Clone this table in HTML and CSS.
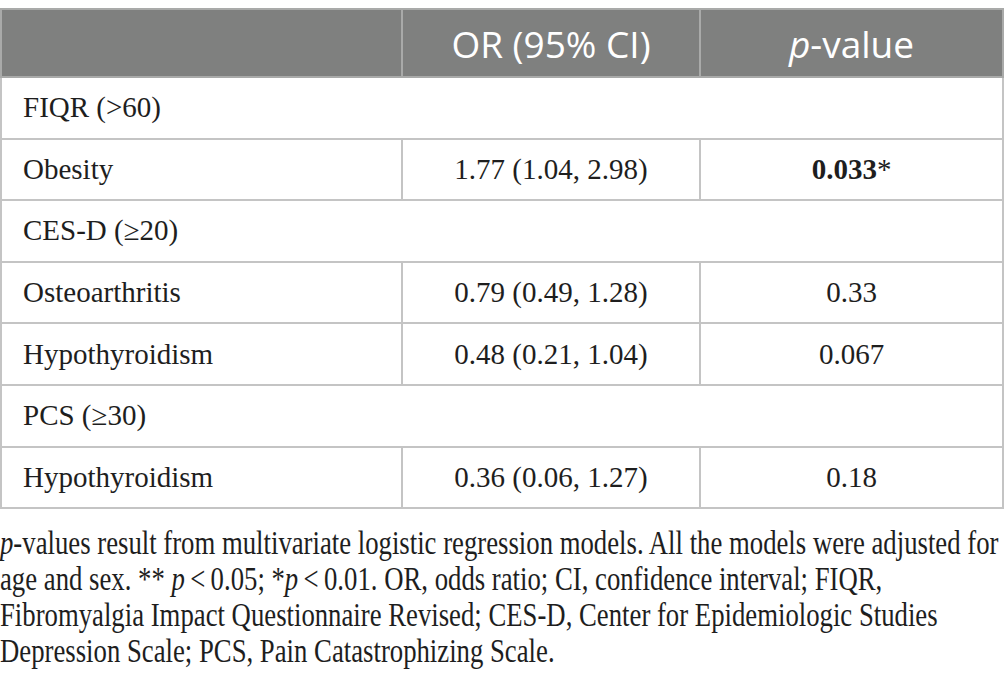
FILE: index.html
```html
<!DOCTYPE html>
<html lang="en">
<head>
    <meta charset="UTF-8">
    <title>Logistic regression results</title>
    <link rel="stylesheet" href="styles.css">
</head>
<body>
    <table class="results">
        <thead>
            <tr>
                <th class="col-label"></th>
                <th class="col-or">OR (95% CI)</th>
                <th class="col-p"><i>p</i>-value</th>
            </tr>
        </thead>
        <tbody>
            <tr class="group">
                <td colspan="3">FIQR (&gt;60)</td>
            </tr>
            <tr>
                <td>Obesity</td>
                <td class="num">1.77 (1.04, 2.98)</td>
                <td class="num"><b>0.033</b>*</td>
            </tr>
            <tr class="group">
                <td colspan="3">CES-D (≥20)</td>
            </tr>
            <tr>
                <td>Osteoarthritis</td>
                <td class="num">0.79 (0.49, 1.28)</td>
                <td class="num">0.33</td>
            </tr>
            <tr>
                <td>Hypothyroidism</td>
                <td class="num">0.48 (0.21, 1.04)</td>
                <td class="num">0.067</td>
            </tr>
            <tr class="group">
                <td colspan="3">PCS (≥30)</td>
            </tr>
            <tr>
                <td>Hypothyroidism</td>
                <td class="num">0.36 (0.06, 1.27)</td>
                <td class="num">0.18</td>
            </tr>
        </tbody>
    </table>

    <div class="note">
        <p><i>p</i>-values result from multivariate logistic regression models. All the models were adjusted for<br>
        age and sex. ** <i>p</i>&thinsp;&lt;&thinsp;0.05; *<i>p</i>&thinsp;&lt;&thinsp;0.01. OR, odds ratio; CI, confidence interval; FIQR,<br>
        Fibromyalgia Impact Questionnaire Revised; CES-D, Center for Epidemiologic Studies<br>
        Depression Scale; PCS, Pain Catastrophizing Scale.</p>
    </div>
</body>
</html>
```

FILE: styles.css
```css
body {
    margin: 0;
    padding-top: 8px;
    background-color: #fff;
    color: #1e1e1e;
    font-family: "Liberation Serif", "Times New Roman", serif;
    overflow: hidden;
}
.results {
    width: 1004px;
    border-collapse: collapse;
    table-layout: fixed;
    font-size: 29px;
}
.results th {
    height: 66px;
    padding: 0;
    background-color: #7f807f;
    color: #fff;
    font-family: "Open Sans", sans-serif;
    font-weight: 400;
    font-size: 37px;
    text-align: center;
    border: 2px solid #a9aaa9;
}
.col-label {
    width: 399px;
}
.col-or {
    width: 296px;
}
.results td {
    height: 59.6px;
    padding: 0 0 0 21px;
    border: 2px solid #c4c4c4;
}
.results td.num {
    padding: 0;
    text-align: center;
}
.results b {
    font-weight: 700;
}
.note {
    width: 1005px;
    padding-top: 16px;
    overflow: hidden;
}
.note p {
    width: 1238px;
    margin: 0;
    font-size: 33px;
    line-height: 36px;
    white-space: nowrap;
    transform: scaleX(0.81);
    transform-origin: left top;
}
```
